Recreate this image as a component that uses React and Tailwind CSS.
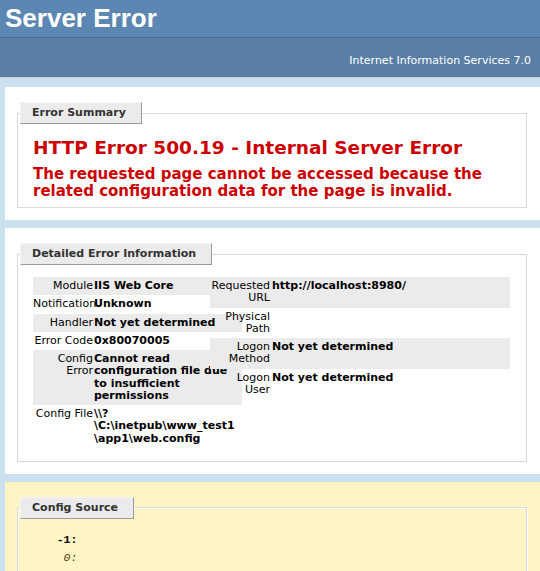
const leftRows = [
  { alt: true, label: ["Module"], value: ["IIS Web Core"] },
  { alt: false, label: ["Notification"], value: ["Unknown"] },
  { alt: true, label: ["Handler"], value: ["Not yet determined"] },
  { alt: false, label: ["Error Code"], value: ["0x80070005"] },
  {
    alt: true,
    label: ["Config", "Error"],
    value: ["Cannot read", "configuration file due", "to insufficient", "permissions"],
  },
  {
    alt: false,
    label: ["Config File"],
    value: [String.raw`\\?`, String.raw`\C:\inetpub\www_test1`, String.raw`\app1\web.config`],
  },
];

const rightRows = [
  { alt: true, label: ["Requested", "URL"], value: ["http://localhost:8980/"] },
  { alt: false, label: ["Physical", "Path"], value: [] },
  { alt: true, label: ["Logon", "Method"], value: ["Not yet determined"] },
  { alt: false, label: ["Logon", "User"], value: ["Not yet determined"] },
];

function Lines({ lines }) {
  return lines.map((l, i) => (
    <span key={i}>
      {i > 0 && <br />}
      {l}
    </span>
  ));
}

function Legend({ children }) {
  return (
    <legend className="-ml-[13px] border border-t-[#f4f4f4] border-l-[#f4f4f4] border-r-[#9a9a9a] border-b-[#9a9a9a] bg-[#ebebeb] pb-[3px] pl-[11px] pr-[15px] pt-[3px] font-bold leading-[14px] text-[#333333]">
      {children}
    </legend>
  );
}

function Fieldset({ title, children, className = "" }) {
  return (
    <fieldset
      className={`mx-[2px] w-[510px] border border-[#dadada] shadow-[inset_1px_1px_0_#ffffff,1px_1px_0_#ffffff] pl-[15px] pr-[16px] ${className}`}
    >
      <Legend>{title}</Legend>
      {children}
    </fieldset>
  );
}

function DetailRow({ row, cols, labelPad }) {
  return (
    <div className={`grid ${cols} py-[3px] leading-[12.25px] ${row.alt ? "bg-[#ebebeb]" : ""}`}>
      <div className={`${labelPad} text-right whitespace-nowrap`}>
        <Lines lines={row.label} />
      </div>
      <div className="font-bold whitespace-nowrap">
        <Lines lines={row.value} />
      </div>
    </div>
  );
}

export default function App() {
  return (
    <div className="min-h-screen overflow-hidden bg-[#CBE1EF] font-['DejaVu_Sans',Verdana,sans-serif] text-[11px] text-black">
      {/* page header */}
      <div className="h-[37px] bg-[#5C87B2] pl-[5px] pt-[3px]">
        <h1 className="font-['Liberation_Sans',Arial,sans-serif] text-[26px] font-bold leading-[30px] text-white">
          Server Error
        </h1>
      </div>
      <div className="h-[41px] border-y border-t-[#4A6C8E] border-b-[#C1CFDD] bg-[#5A7FA5] pr-[9px] pt-[16px] text-right leading-[14px] text-white">
        Internet Information Services 7.0
      </div>

      {/* summary */}
      <div className="ml-[5px] mt-[9px] bg-white pb-[12px] pl-[10px] pt-[15px]">
        <Fieldset title="Error Summary" className="pb-[7px]">
          <h2 className="mt-[12px] text-[18.5px] font-bold leading-[23px] text-[#CC0000]">
            HTTP Error 500.19 - Internal Server Error
          </h2>
          <h3 className="mt-[7px] text-[15px] font-bold leading-[17px] text-[#CC0000]">
            The requested page cannot be accessed because the
            <br />
            related configuration data for the page is invalid.
          </h3>
        </Fieldset>
      </div>

      {/* details */}
      <div className="ml-[5px] mt-[8px] bg-white pb-[12px] pl-[10px] pt-[15px]">
        <Fieldset title="Detailed Error Information" className="pb-[13px]">
          <div className="mt-[12px] flex">
            <div className="w-[177px] shrink-0">
              <div className="w-[209px]">
                {leftRows.map((r, i) => (
                  <DetailRow key={i} row={r} cols="grid-cols-[61px_148px]" labelPad="pr-[1px]" />
                ))}
              </div>
            </div>
            <div className="w-[300px] shrink-0">
              {rightRows.map((r, i) => (
                <DetailRow key={i} row={r} cols="grid-cols-[62px_1fr]" labelPad="pr-[2px]" />
              ))}
            </div>
          </div>
        </Fieldset>
      </div>

      {/* config source */}
      <div className="ml-[5px] mt-[8px] bg-[#fff5c4] pb-[12px] pl-[10px] pt-[15px]">
        <Fieldset title="Config Source" className="pb-[11px]">
          <pre className="mt-[12px] pl-[3px] font-['Liberation_Mono','Courier_New',monospace] text-[11.5px] leading-[18px]">
            <code className="font-bold">{"   -1: "}</code>
            {"\n"}
            <code className="italic text-[#4f4222]">{"    0: "}</code>
            {"\n"}
          </pre>
        </Fieldset>
      </div>
    </div>
  );
}
